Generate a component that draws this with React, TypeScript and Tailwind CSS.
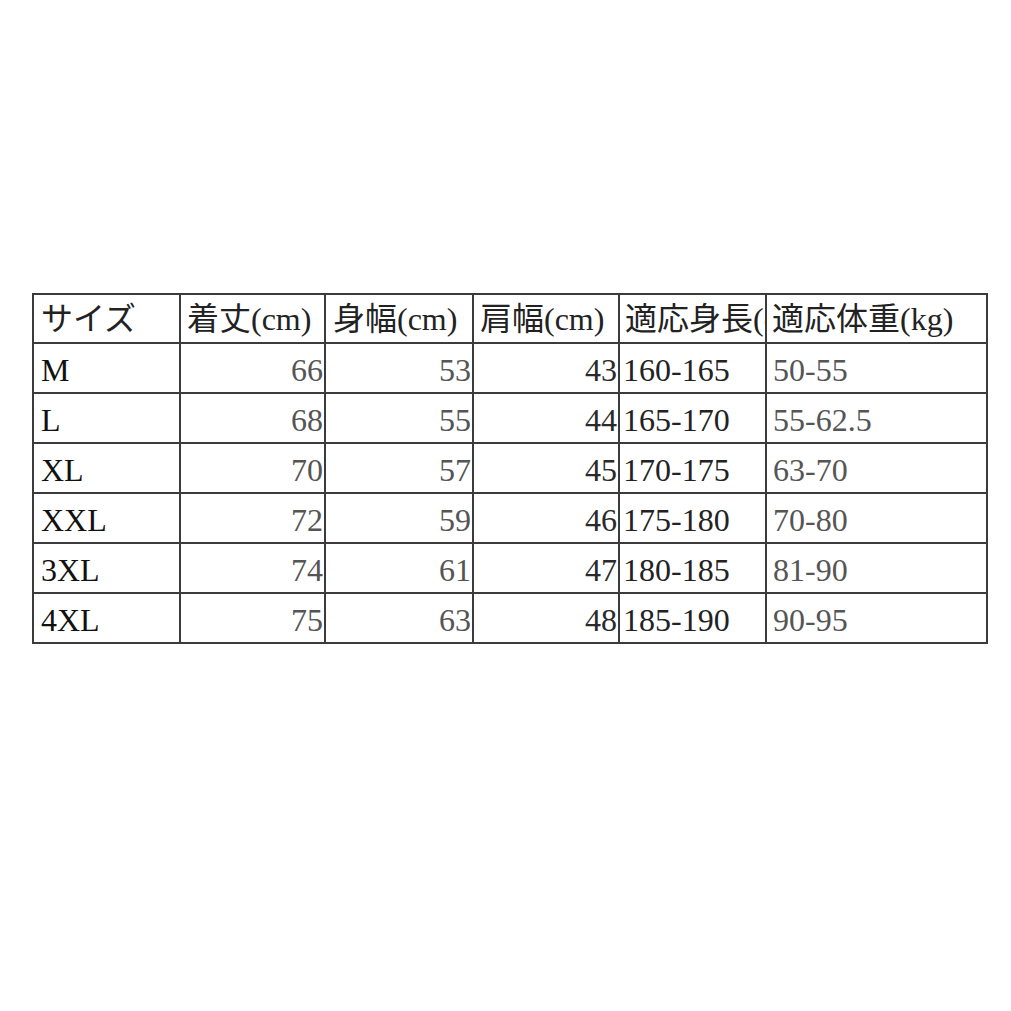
import React from 'react';

const headers = ['サイズ', '着丈(cm)', '身幅(cm)', '肩幅(cm)', '適応身長(cm)', '適応体重(kg)'];

const rows: Array<[string, string, string, string, string, string]> = [
  ['M', '66', '53', '43', '160-165', '50-55'],
  ['L', '68', '55', '44', '165-170', '55-62.5'],
  ['XL', '70', '57', '45', '170-175', '63-70'],
  ['XXL', '72', '59', '46', '175-180', '70-80'],
  ['3XL', '74', '61', '47', '180-185', '81-90'],
  ['4XL', '75', '63', '48', '185-190', '90-95'],
];

// per-column cell styling: alignment, padding, ink colour
const colClass = [
  'justify-start pl-[7px] text-[#111]',
  'justify-end pr-[1px] text-[#555]',
  'justify-end pr-[1px] text-[#555]',
  'justify-end pr-[1px] text-[#2a2a2a]',
  'justify-start pl-[3px] text-[#222]',
  'justify-start pl-[6px] text-[#555]',
];

const headClass = [
  'pl-[7px]',
  'pl-[6px]',
  'pl-[7px]',
  'pl-[6px]',
  'pl-[5px]',
  'pl-[5px]',
];

export default function App() {
  return (
    <div
      className="w-full min-h-screen bg-white pt-[293px] pl-[32px]"
      style={{ fontFamily: '"Liberation Serif", "Noto Sans CJK JP", serif' }}
    >
      <div className="inline-grid grid-cols-[145px_143px_146px_144px_145px_219px] auto-rows-[48px] grid-rows-[47px] gap-[2px] p-[2px] bg-[#3b3b3b]">
        {headers.map((h, i) => (
          <div
            key={h}
            className={`bg-white flex items-center overflow-hidden whitespace-nowrap text-[32px] leading-none text-[#222] ${headClass[i]}`}
          >
            {h}
          </div>
        ))}
        {rows.map((r) =>
          r.map((v, i) => (
            <div
              key={r[0] + '-' + i}
              className={`bg-white flex items-center pt-[3px] overflow-hidden whitespace-nowrap text-[32px] leading-none ${colClass[i]}`}
            >
              {v}
            </div>
          ))
        )}
      </div>
    </div>
  );
}
